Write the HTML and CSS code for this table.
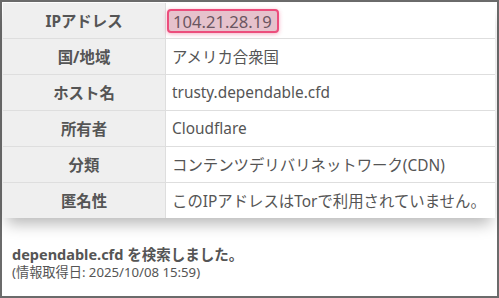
FILE: index.html
```html
<!DOCTYPE html>
<html lang="ja">
<head>
<meta charset="utf-8">
<link rel="stylesheet" href="styles.css">
</head>
<body>
<div class="frame">
  <table class="info">
    <tr><th>IPアドレス</th><td><span class="ip">104.21.28.19</span></td></tr>
    <tr><th>国/地域</th><td>アメリカ合衆国</td></tr>
    <tr><th>ホスト名</th><td>trusty.dependable.cfd</td></tr>
    <tr><th>所有者</th><td>Cloudflare</td></tr>
    <tr><th>分類</th><td>コンテンツデリバリネットワーク(CDN)</td></tr>
    <tr><th>匿名性</th><td>このIPアドレスはTorで利用されていません。</td></tr>
  </table>
  <div class="result">
    <p class="searched">dependable.cfd を検索しました。</p>
    <p class="date">(情報取得日: 2025/10/08 15:59)</p>
  </div>
</div>
</body>
</html>
```

FILE: styles.css
```css
html, body {
  margin: 0;
  padding: 0;
  background: #fff;
}
body {
  font-family: "Noto Sans", "Noto Sans CJK JP", sans-serif;
  color: #555;
}
.frame {
  width: 499px;
  height: 298px;
  box-sizing: border-box;
  border: 2px solid #6b6b6b;
  padding: 1px 2px 0 1px;
  background: #fff;
}
.info {
  width: 100%;
  border-collapse: collapse;
  box-shadow: 0 10px 14px -4px rgba(0, 0, 0, 0.28);
  background: #fff;
}
.info th, .info td {
  height: 35px;
  padding: 0;
  border-bottom: 1px solid #dedede;
  font-size: 15.4px;
  vertical-align: middle;
}
.info tr:last-child th, .info tr:last-child td {
  border-bottom: none;
}
.info th {
  width: 162px;
  background: #efefef;
  font-weight: bold;
  text-align: center;
  border-right: 1px solid #dedede;
}
.info td {
  text-align: left;
  padding-left: 6px;
}
.ip {
  display: inline-block;
  margin-left: -5px;
  padding: 1px 5px 0 4px;
  line-height: 19px;
  background: #e6c2cc;
  border: 2px solid #ec4d7c;
  border-radius: 4px;
  box-shadow: 0 1px 4px rgba(236, 77, 124, 0.45);
  color: #6a5560;
  font-size: 16.6px;
}
.result {
  padding: 27px 0 0 9px;
}
.result p {
  margin: 0;
}
.searched {
  font-size: 14.5px;
  font-weight: bold;
  line-height: 18px;
}
.date {
  font-size: 13.2px;
  line-height: 18px;
}
```
